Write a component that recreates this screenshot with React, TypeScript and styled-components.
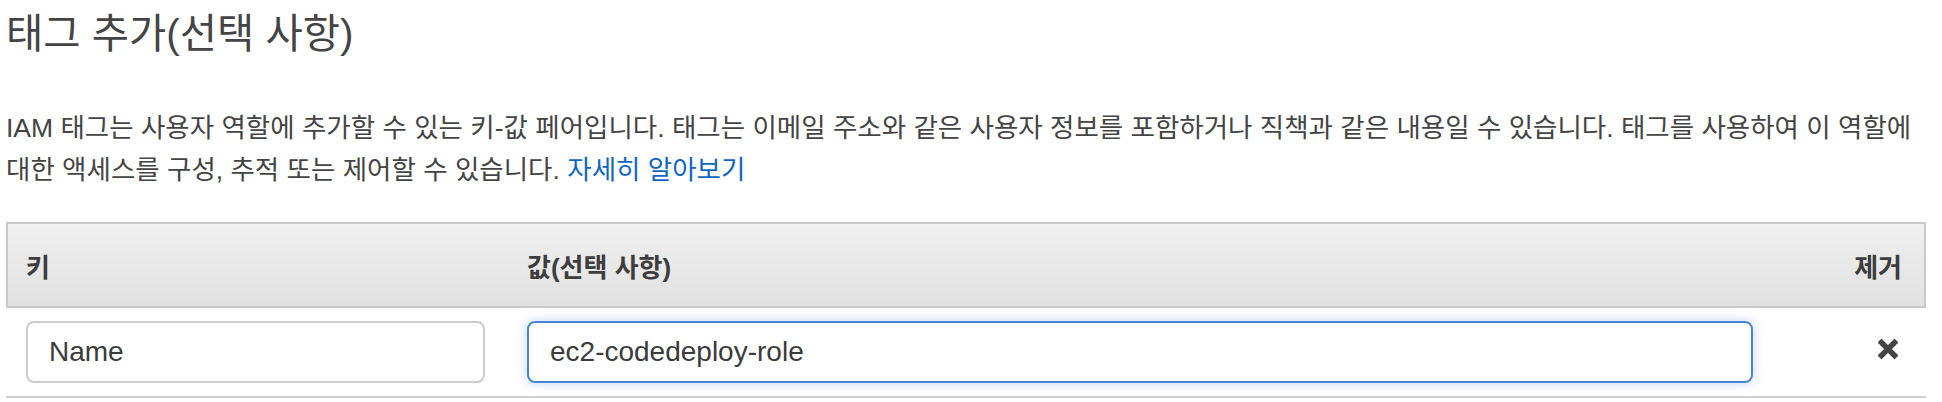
import React from 'react';
import styled, { createGlobalStyle, css } from 'styled-components';

const GlobalStyle = createGlobalStyle`
  html, body {
    margin: 0;
    padding: 0;
    background: #ffffff;
  }

  body {
    font-family: "Liberation Sans", "Noto Sans CJK KR", sans-serif;
    color: #444444;
  }
`;

const columns = css`
  display: grid;
  grid-template-columns: 459px 1226px 1fr;
  column-gap: 42px;
  align-items: center;
`;

export default function App() {
  return (
    <>
      <GlobalStyle />
      <Page>
        <Title>태그 추가(선택 사항)</Title>
        <Intro>
          IAM 태그는 사용자 역할에 추가할 수 있는 키-값 페어입니다. 태그는 이메일 주소와 같은 사용자 정보를 포함하거나
          직책과 같은 내용일 수 있습니다. 태그를 사용하여 이 역할에 대한 액세스를 구성, 추적 또는 제어할 수 있습니다.{' '}
          <LearnMore href="#">자세히 알아보기</LearnMore>
        </Intro>
        <TagTable>
          <HeadRow>
            <HeadCell>키</HeadCell>
            <HeadCell>값(선택 사항)</HeadCell>
            <HeadCell $alignEnd>제거</HeadCell>
          </HeadRow>
          <BodyRow>
            <TagInput readOnly value="Name" />
            <TagInput readOnly value="ec2-codedeploy-role" $focused />
            <RemoveCell>
              <RemoveButton type="button" aria-label="제거">
                <svg width="22" height="22" viewBox="0 0 22 22">
                  <path
                    d="M4.5 1.5 L11 8 L17.5 1.5 L20.5 4.5 L14 11 L20.5 17.5 L17.5 20.5 L11 14 L4.5 20.5 L1.5 17.5 L8 11 L1.5 4.5 Z"
                    fill="#444444"
                    stroke="#444444"
                    strokeWidth="1.2"
                    strokeLinejoin="round"
                  />
                </svg>
              </RemoveButton>
            </RemoveCell>
          </BodyRow>
        </TagTable>
      </Page>
    </>
  );
}

const Page = styled.div`
  padding: 12px 16px 0 6px;
`;

const Title = styled.h2`
  margin: 0;
  font-size: 40.5px;
  line-height: 44px;
  font-weight: 400;
  color: #444444;
`;

const Intro = styled.p`
  margin: 51px 0 0;
  font-size: 26.5px;
  line-height: 42px;
  color: #444444;
`;

const LearnMore = styled.a`
  color: #0f66c2;
  text-decoration: none;
`;

const TagTable = styled.div`
  margin-top: 31px;
`;

const HeadRow = styled.div`
  ${columns};
  height: 82px;
  padding: 0 22px 0 18px;
  border: 2px solid #c9c9c9;
  background: linear-gradient(to bottom, #f0f0f0, #e1e1e1);
`;

const HeadCell = styled.div<{ $alignEnd?: boolean }>`
  font-size: 26px;
  font-weight: 700;
  color: #3d3d3d;
  text-align: ${({ $alignEnd }) => ($alignEnd ? 'right' : 'left')};
`;

const BodyRow = styled.div`
  ${columns};
  padding: 13px 24px 13px 20px;
  border-bottom: 2px solid #cfcfcf;
`;

const TagInput = styled.input<{ $focused?: boolean }>`
  box-sizing: border-box;
  width: 100%;
  height: 62px;
  padding: 0 21px;
  border: 2px solid #cccccc;
  border-radius: 8px;
  font-family: "Liberation Sans", "Noto Sans CJK KR", sans-serif;
  font-size: 28px;
  color: #3b3b3b;
  background: #ffffff;
  outline: none;

  ${({ $focused }) =>
    $focused &&
    css`
      border-color: #4a88d6;
      box-shadow: 0 0 12px rgba(74, 136, 214, 0.35);
    `}
`;

const RemoveCell = styled.div`
  display: flex;
  justify-content: flex-end;
`;

const RemoveButton = styled.button`
  display: flex;
  align-items: center;
  justify-content: center;
  margin: -6px 3px 0 0;
  padding: 0;
  border: none;
  background: none;
  cursor: pointer;
`;
